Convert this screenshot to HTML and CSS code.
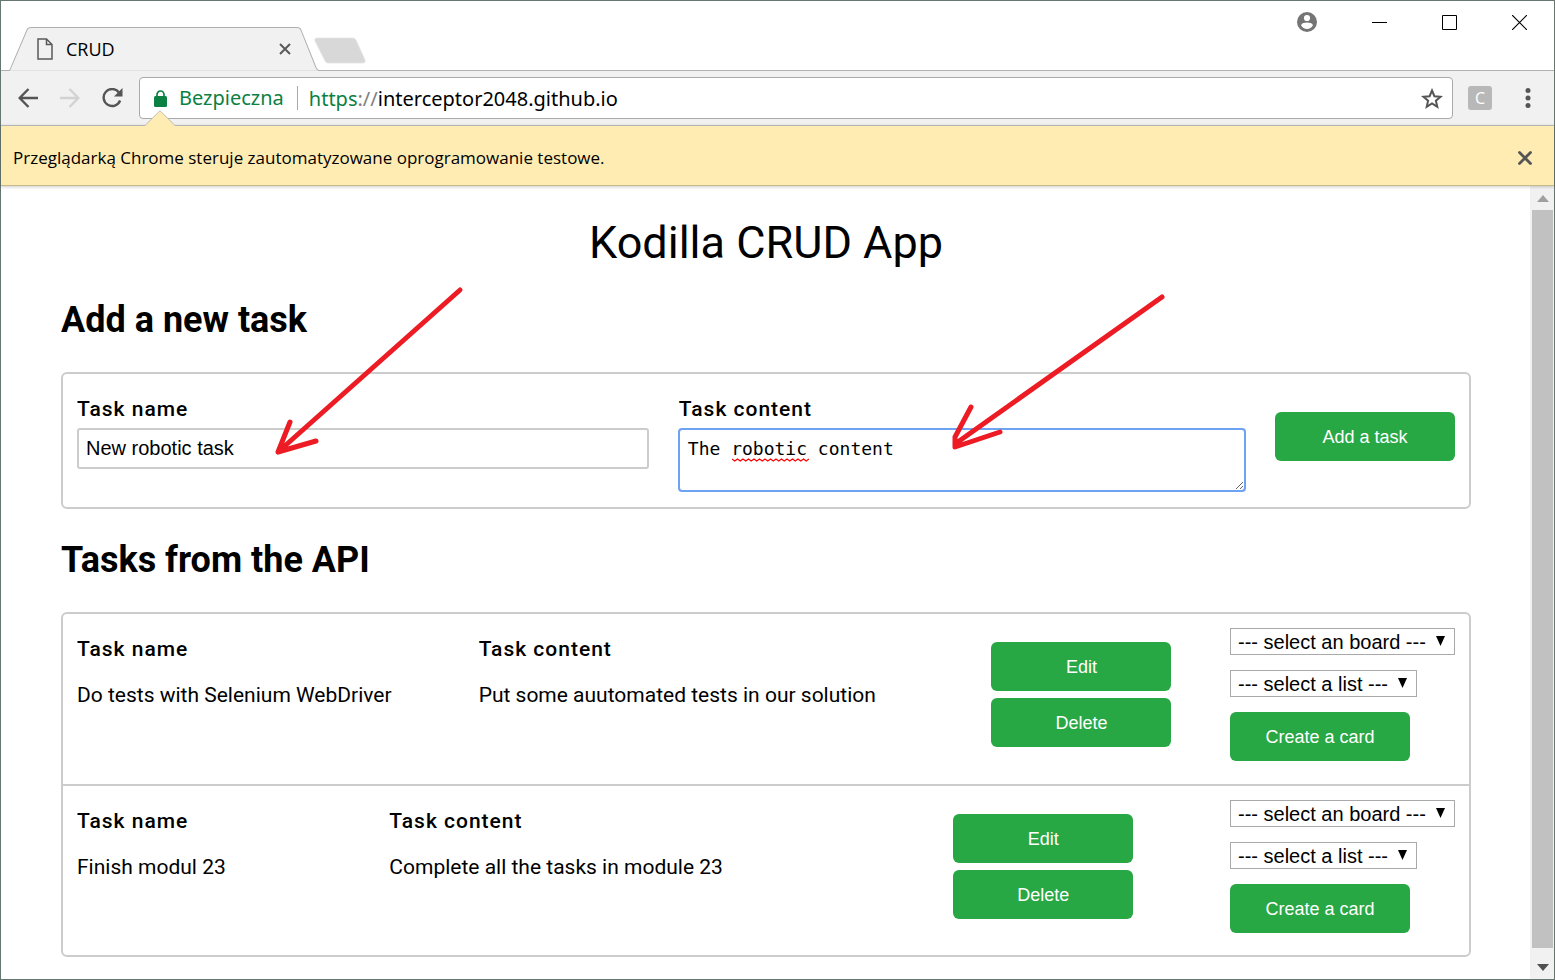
FILE: index.html
```
<!DOCTYPE html>
<html lang="pl">
<head>
<meta charset="utf-8">
<title>CRUD</title>
<link rel="stylesheet" href="styles.css">
</head>
<body>
<div class="window">
  <header class="tabstrip">
    <div class="tab">
      <svg class="tab-shape" viewBox="0 0 310 43" preserveAspectRatio="none" aria-hidden="true"><path d="M0 42.500Q1 42.500 2 39.500L18 3Q19 .5 22 .5H288Q291 .5 292 3L307 39.500Q308.500 42.500 310 42.500" fill="#f1f1f1" stroke="#b0b0b0"/><path d="M1 43H309" stroke="#f1f1f1"/></svg>
      <svg class="page-icon" width="16" height="22" viewBox="0 0 16 22" fill="none" stroke="#5a5a5a" stroke-width="1.500" aria-hidden="true"><path d="M1 1H9.500L15 6.500V21H1ZM9.500 1V6.500H15"/></svg>
      <span class="tab-title">CRUD</span>
      <button class="icon-button tab-close" type="button" aria-label="Zamknij kartę"><svg width="12" height="12" viewBox="0 0 12 12" stroke="#5a5a5a" stroke-width="2"><path d="M1 1L11 11M11 1L1 11"/></svg></button>
    </div>
    <button class="icon-button new-tab" type="button" aria-label="Nowa karta"><svg width="52" height="27" viewBox="0 0 52 27"><path d="M3 1H39Q41 1 42 3L51 23Q52 26 49 26H14Q12 26 11 24L1 4Q0 1 3 1Z" fill="#d8d8d8" stroke="#e4e4e4" stroke-width=".8"/></svg></button>
    <div class="window-controls">
      <button class="icon-button" type="button" aria-label="Profil"><svg width="20" height="20" viewBox="0 0 20 20"><circle cx="10" cy="10" r="10" fill="#757575"/><circle cx="10" cy="6" r="3.100" fill="#fff"/><path d="M4 13.200C5 11.200 7.500 10.600 10 10.600S15 11.200 16 13.200C14.800 15.500 12.500 17 10 17S5.200 15.500 4 13.200Z" fill="#fff"/></svg></button>
      <button class="icon-button" type="button" aria-label="Minimalizuj"><svg width="15" height="15" viewBox="0 0 15 15"><path d="M0 7.500H15" stroke="#000"/></svg></button>
      <button class="icon-button" type="button" aria-label="Maksymalizuj"><svg width="15" height="15" viewBox="0 0 15 15"><path d="M.5 .5H14.500V14.500H.5Z" fill="none" stroke="#000"/></svg></button>
      <button class="icon-button" type="button" aria-label="Zamknij"><svg width="15" height="15" viewBox="0 0 15 15"><path d="M0 0L15 15M15 0L0 15" stroke="#000" stroke-width="1.200"/></svg></button>
    </div>
  </header>

  <nav class="toolbar">
    <button class="icon-button" type="button" aria-label="Wstecz"><svg width="20" height="20" viewBox="0 0 20 20" fill="none" stroke="#555" stroke-width="2.400"><path d="M20 10H2M10.500 1L1.700 10L10.500 19"/></svg></button>
    <button class="icon-button" type="button" aria-label="Dalej"><svg width="20" height="20" viewBox="0 0 20 20" fill="none" stroke="#d2d2d2" stroke-width="2.400"><path d="M0 10H18M9.500 1L18.300 10L9.500 19"/></svg></button>
    <button class="icon-button" type="button" aria-label="Odśwież"><svg width="21" height="20" viewBox="0 0 21 20"><path d="M17 4.500A8.500 8.500 0 1 0 18.100 12.500" fill="none" stroke="#555" stroke-width="2.400"/><path d="M20.500 0V8.500H12Z" fill="#555"/></svg></button>
    <div class="omnibox">
      <svg width="13" height="17" viewBox="0 0 13 17" aria-hidden="true"><rect y="6" width="13" height="11" rx="1.500" fill="#0b8043"/><path d="M3 7V4.500A3.500 3.500 0 0 1 10 4.500V7" fill="none" stroke="#0b8043" stroke-width="1.700"/></svg>
      <span class="secure">Bezpieczna</span>
      <span class="url"><span class="scheme">https</span><span class="slashes">://</span>interceptor2048.github.io</span>
      <button class="icon-button" type="button" aria-label="Dodaj zakładkę"><svg width="22" height="21" viewBox="0 0 22 21"><path d="M11 2.500L13.400 8.200L19.600 8.700L14.900 12.700L16.300 18.800L11 15.500L5.700 18.800L7.100 12.700L2.400 8.700L8.600 8.200Z" fill="none" stroke="#555" stroke-width="2"/></svg></button>
    </div>
    <button class="extension" type="button">C</button>
    <button class="icon-button" type="button" aria-label="Menu"><svg width="6" height="20" viewBox="0 0 6 20" fill="#555"><circle cx="3" cy="2.500" r="2.500"/><circle cx="3" cy="10" r="2.500"/><circle cx="3" cy="17.500" r="2.500"/></svg></button>
  </nav>

  <div class="infobar">
    <svg class="infobar-tip" width="30" height="16" viewBox="0 0 30 16" aria-hidden="true"><path d="M0 15L15 .7L30 15V16H0Z" fill="#ffecb3"/><path d="M0 15.500L15 .7L30 15.500" fill="none" stroke="#bbb"/></svg>
    <span>Przeglądarką Chrome steruje zautomatyzowane oprogramowanie testowe.</span>
    <button class="icon-button" type="button" aria-label="Zamknij pasek"><svg width="14" height="14" viewBox="0 0 14 14" stroke="#555" stroke-width="2.800" stroke-linecap="round"><path d="M1.500 1.500L12.500 12.500M12.500 1.500L1.500 12.500"/></svg></button>
  </div>

  <div class="viewport">
    <main class="page">
      <h1>Kodilla CRUD App</h1>

      <h2>Add a new task</h2>
      <form class="card task-form">
        <div class="field field-name">
          <label class="label" for="task-name">Task name</label>
          <input class="text-input" id="task-name" type="text" value="New robotic task">
        </div>
        <div class="field field-content">
          <label class="label" for="task-content">Task content</label>
          <div class="editor">
            <textarea class="text-area" id="task-content" spellcheck="false">The robotic content</textarea>
            <svg class="squiggle" width="77" height="4" viewBox="0 0 77 4" fill="none" stroke="#f00" stroke-width="1.200" aria-hidden="true"><path d="M0 1L2.750 3L5.500 1L8.250 3L11 1L13.750 3L16.500 1L19.250 3L22 1L24.750 3L27.500 1L30.250 3L33 1L35.750 3L38.500 1L41.250 3L44 1L46.750 3L49.500 1L52.250 3L55 1L57.750 3L60.500 1L63.250 3L66 1L68.750 3L71.500 1L74.250 3L77 1"/></svg>
          </div>
        </div>
        <button class="button" type="button">Add a task</button>
      </form>

      <h2>Tasks from the API</h2>
      <div class="card">
        <section class="task">
          <div class="task-name"><h3 class="label">Task name</h3><p>Do tests with Selenium WebDriver</p></div>
          <div class="task-content"><h3 class="label">Task content</h3><p>Put some auutomated tests in our solution</p></div>
          <div class="task-actions"><button class="button" type="button">Edit</button><button class="button" type="button">Delete</button></div>
          <div class="task-card">
            <div class="select"><select aria-label="Board"><option>--- select an board ---</option></select><svg width="9" height="10" viewBox="0 0 9 10" aria-hidden="true"><path d="M0 0H9L4.500 10Z"/></svg></div>
            <div class="select"><select aria-label="List"><option>--- select a list ---</option></select><svg width="9" height="10" viewBox="0 0 9 10" aria-hidden="true"><path d="M0 0H9L4.500 10Z"/></svg></div>
            <button class="button" type="button">Create a card</button>
          </div>
        </section>
        <section class="task">
          <div class="task-name"><h3 class="label">Task name</h3><p>Finish modul 23</p></div>
          <div class="task-content"><h3 class="label">Task content</h3><p>Complete all the tasks in module 23</p></div>
          <div class="task-actions"><button class="button" type="button">Edit</button><button class="button" type="button">Delete</button></div>
          <div class="task-card">
            <div class="select"><select aria-label="Board"><option>--- select an board ---</option></select><svg width="9" height="10" viewBox="0 0 9 10" aria-hidden="true"><path d="M0 0H9L4.500 10Z"/></svg></div>
            <div class="select"><select aria-label="List"><option>--- select a list ---</option></select><svg width="9" height="10" viewBox="0 0 9 10" aria-hidden="true"><path d="M0 0H9L4.500 10Z"/></svg></div>
            <button class="button" type="button">Create a card</button>
          </div>
        </section>
      </div>
    </main>
    <div class="scrollbar" aria-hidden="true">
      <svg width="12" height="7" viewBox="0 0 12 7"><path d="M0 7L6 0L12 7Z" fill="#a0a0a0"/></svg>
      <div class="thumb"></div>
      <svg width="12" height="7" viewBox="0 0 12 7"><path d="M0 0H12L6 7Z" fill="#505050"/></svg>
    </div>
  </div>

  <svg class="pointer pointer-name" width="190" height="170" viewBox="0 0 190 170" aria-hidden="true"><path d="M184 6L2 168M14 138L2 168L40 157"/></svg>
  <svg class="pointer pointer-content" width="220" height="160" viewBox="0 0 220 160" aria-hidden="true"><path d="M212 5L5 152M21 115L5 145V155L50 140"/></svg>
</div>
</body>
</html>
```

FILE: styles.css
```
* { box-sizing: border-box; }

body {
  margin: 0;
  background: #fff;
  color: #000;
  font-family: Roboto, sans-serif;
}

h1, h2, h3, p { margin: 0; }

.window {
  position: relative;
  display: flex;
  flex-direction: column;
  min-height: 100vh;
  border: 1px solid #66776f;
  font-size: 20px;
}

.icon-button {
  display: flex;
  flex: none;
  padding: 0;
  border: 0;
  background: none;
}

/* Browser chrome */
.tabstrip {
  display: flex;
  align-items: flex-end;
  height: 70px;
  padding-left: 8px;
  border-bottom: 1px solid #b0b0b0;
  font-family: "Open Sans", sans-serif;
  font-size: 18px;
}

.tab {
  position: relative;
  display: flex;
  align-items: center;
  gap: 13px;
  width: 310px;
  height: 44px;
  margin-bottom: -1px;
  padding: 0 28px;
}

.tab > * { position: relative; }

.tab > .tab-shape {
  position: absolute;
  inset: 0;
  width: 100%;
  height: 100%;
}

.tab-close { margin-left: auto; }

.new-tab {
  margin: 0 0 6px -5px;
}

.window-controls {
  display: flex;
  align-items: center;
  align-self: flex-start;
  gap: 55px;
  height: 42px;
  margin-left: auto;
  padding-right: 27px;
}

.toolbar {
  display: flex;
  align-items: center;
  height: 54px;
  padding: 0 23px 0 17px;
  gap: 22px;
  background: #f1f1f1;
  font-family: "Noto Sans", sans-serif;
}

.omnibox {
  display: flex;
  flex: 1;
  align-items: center;
  height: 42px;
  margin: 0 -7px 0 -6px;
  padding: 0 9px 0 14px;
  border: 1px solid #a9a9a9;
  border-radius: 4px;
  background: #fff;
}

.secure {
  margin-left: 12px;
  padding-right: 13px;
  border-right: 1px solid #a9a9a9;
  line-height: 24px;
}

.secure, .scheme { color: #0b8043; }

.slashes { color: #808080; }

.url {
  flex: 1;
  padding-left: 11px;
}

.extension {
  width: 24px;
  height: 24px;
  margin-right: 11px;
  padding: 0;
  border: 0;
  border-radius: 3px;
  background: #b8b8b8;
  color: #fff;
  font-family: "Open Sans", sans-serif;
  font-size: 16px;
  line-height: 24px;
}

.infobar {
  position: relative;
  display: flex;
  align-items: center;
  justify-content: space-between;
  height: 61px;
  padding: 4px 22px 0 12px;
  border-top: 1px solid #b5b5b5;
  border-bottom: 1px solid #c8b98b;
  background: #ffecb3;
  box-shadow: 0 1px 3px rgba(0, 0, 0, .2);
  font-family: "Open Sans", sans-serif;
  font-size: 17px;
}

.infobar-tip {
  position: absolute;
  top: -16px;
  left: 144px;
}

.viewport {
  display: flex;
  flex: 1;
}

.scrollbar {
  display: flex;
  flex-direction: column;
  align-items: center;
  gap: 8px;
  width: 24px;
  padding: 9px 1px 8px 2px;
  background: #f1f1f1;
}

.thumb {
  flex: 1;
  width: 100%;
  margin-bottom: 8px;
  background: #c1c1c1;
}

/* Page */
.page {
  flex: 1;
  padding: 30px 59px 22px 60px;
}

h1 {
  font-size: 45px;
  font-weight: 400;
  line-height: 53px;
  text-align: center;
}

h2 {
  margin: 30px 0;
  font-size: 36px;
  font-weight: 700;
  line-height: 43px;
}

.card {
  border: 2px solid #ccc;
  border-radius: 6px;
}

.label {
  display: block;
  font-size: 21px;
  font-weight: 500;
  letter-spacing: 1px;
  line-height: 30px;
}

.task-form {
  display: flex;
  align-items: flex-start;
  gap: 30px;
  padding: 20px 14px 16px;
}

.task-form .button { margin-top: 18px; }

.field-name { flex: 101; }

.field-content { flex: 100; }

.text-input, .text-area {
  display: block;
  width: 100%;
  padding: 0 7px;
  border: 2px solid #ccc;
  border-radius: 3px;
  background: #fff;
  color: #000;
}

.text-input {
  height: 41px;
  margin-top: 4px;
  font-family: "Liberation Sans", sans-serif;
  font-size: 20px;
}

.editor {
  position: relative;
  margin-top: 5px;
}

.text-area {
  height: 62px;
  padding-top: 7px;
  padding-left: 8px;
  border-width: 1px;
  outline: 2px solid #6ea3f3;
  outline-offset: -1px;
  font-family: "DejaVu Sans Mono", monospace;
  font-size: 18px;
  line-height: 24px;
}

.squiggle {
  position: absolute;
  top: 29px;
  left: 53px;
}

.button {
  flex: none;
  width: 180px;
  height: 49px;
  padding: 1px 0 0;
  border: 0;
  border-radius: 6px;
  background: #28a745;
  color: #fff;
  font-family: "Liberation Sans", sans-serif;
  font-size: 18px;
}

.task {
  display: flex;
  align-items: flex-start;
  padding: 14px 14px 23px;
}

.task + .task {
  padding-bottom: 22px;
  border-top: 2px solid #ccc;
}

.task-name, .task-content {
  padding: 6px 30px 0 0;
}

.task-name { flex: 2 1 auto; }

.task-content { flex: 3 1 auto; }

.task p {
  margin-top: 16px;
  font-size: 21px;
  line-height: 30px;
}

.task-actions {
  display: flex;
  flex: 1 1 auto;
  flex-direction: column;
  gap: 7px;
  padding: 14px 30px 0 0;
}

.task-card {
  display: flex;
  flex-direction: column;
  align-items: flex-start;
  gap: 15px;
}

.select { position: relative; }

.select select {
  display: block;
  height: 27px;
  padding: 0 28px 0 7px;
  border: 1px solid #a9a9a9;
  border-radius: 0;
  appearance: none;
  background: #fff;
  color: #000;
  font-family: "Liberation Sans", sans-serif;
  font-size: 20px;
}

.select svg {
  position: absolute;
  top: 8px;
  right: 10px;
  pointer-events: none;
}

/* Hand-drawn arrows */
.pointer {
  position: absolute;
  overflow: visible;
  fill: none;
  stroke: #ed1c24;
  stroke-width: 5;
  stroke-linecap: round;
  stroke-linejoin: round;
  pointer-events: none;
}

.pointer-name {
  top: 283px;
  left: 275px;
}

.pointer-content {
  top: 291px;
  left: 949px;
}
```
